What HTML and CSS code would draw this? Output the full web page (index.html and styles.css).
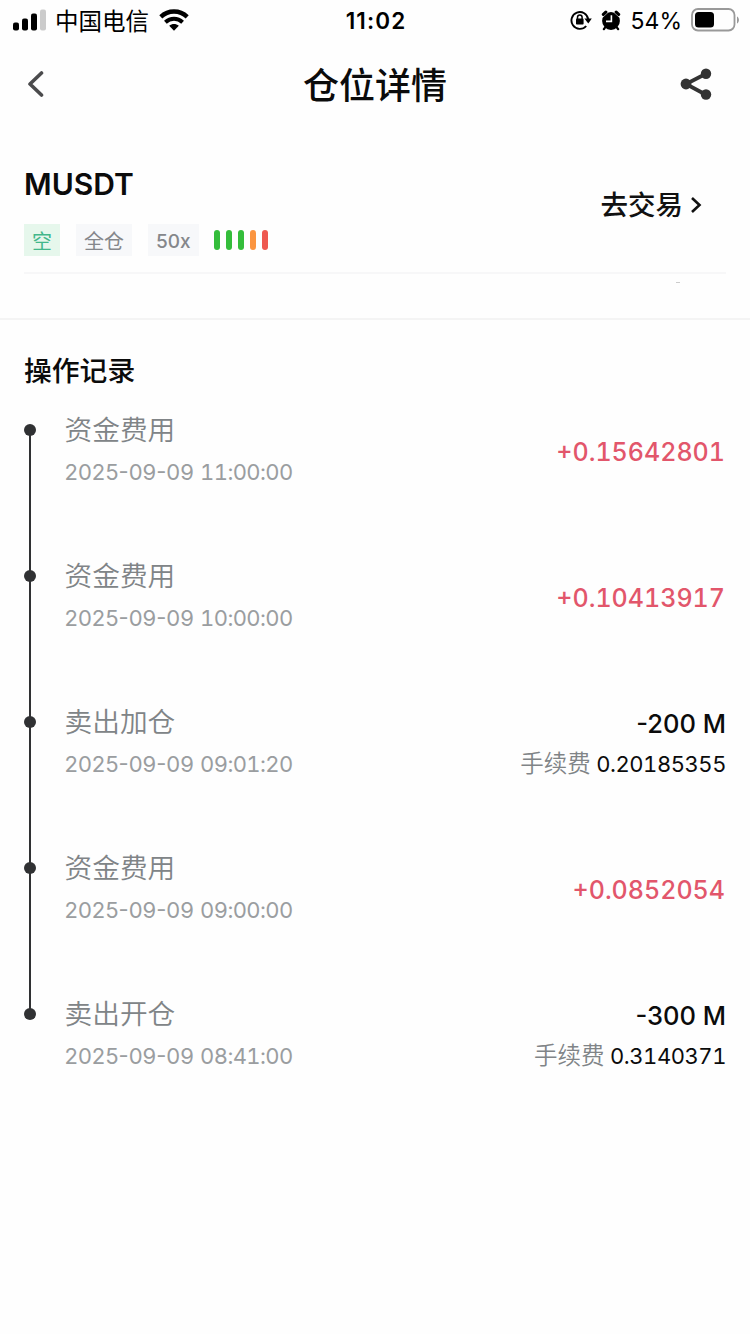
FILE: index.html
```html
<!DOCTYPE html>
<html lang="zh-CN">
<head>
  <meta charset="UTF-8" />
  <meta name="viewport" content="width=device-width, initial-scale=1.0"/>
  <title>仓位详情</title>
  <link rel="stylesheet" href="styles.css">
</head>
<body>
  <div class="status-bar">
    <div class="status-left">
      <svg class="signal" width="33" height="22" viewBox="0 0 33 22">
        <rect x="0" y="13.5" width="6" height="8" rx="2"/>
        <rect x="9" y="9.5" width="6" height="12" rx="2"/>
        <rect x="18" y="4.5" width="6" height="17" rx="2"/>
        <rect x="27" y="0.5" width="6" height="21" rx="2" fill="#cbcbcb"/>
      </svg>
      <span class="carrier">中国电信</span>
      <svg class="wifi" width="30" height="22" viewBox="0 0 30 22">
        <path d="M1.8 7.8C9.3 .7 20.7 .7 28.2 7.8" fill="none" stroke="#000" stroke-width="4.4"/>
        <path d="M6.4 13.2C11.4 8.6 18.6 8.6 23.6 13.2" fill="none" stroke="#000" stroke-width="4"/>
        <path d="M10.2 16.8C13 14.4 17 14.4 19.8 16.8L15 21.8Z"/>
      </svg>
    </div>
    <div class="status-time">11:02</div>
    <div class="status-right">
      <svg class="lock" width="22" height="20" viewBox="0 0 22 20">
        <path d="M18.2 9.5A8.4 8.4 0 1 0 16.2 16" fill="none" stroke="#000" stroke-width="1.9"/>
        <path d="M14.4 8.6h7.4l-3.5 4.8z"/>
        <rect x="6" y="8.6" width="7.6" height="6" rx="0.8"/>
        <path d="M7.5 9V7.2a2.3 2.3 0 0 1 4.6 0V9" fill="none" stroke="#000" stroke-width="1.5"/>
      </svg>
      <svg class="alarm" width="20" height="21" viewBox="0 0 20 21">
        <circle cx="10" cy="11" r="8.9"/>
        <path d="M2.4 4.4L4.8 2.2M15.2 2.2l2.4 2.2" stroke="#000" stroke-width="3.2" stroke-linecap="round"/>
        <path d="M1.8 7.2L7.4 2.2M18.2 7.2L12.6 2.2" stroke="#fff" stroke-width="0.5"/>
        <path d="M4.2 17.4l-1.4 1.8M15.8 17.4l1.4 1.8" stroke="#000" stroke-width="2.2" stroke-linecap="round"/>
        <path d="M10.4 5.2v6.2H5" fill="none" stroke="#fff" stroke-width="1.6"/>
      </svg>
      <span class="percent">54%</span>
      <svg class="battery" width="48" height="24" viewBox="0 0 48 24">
        <rect x="1" y="1" width="42.5" height="21.5" rx="6" fill="none" stroke="#999" stroke-width="1.8"/>
        <rect x="4" y="4" width="19" height="15.5" rx="3.5"/>
        <path d="M46 8.5c2.6 1.2 2.6 5.8 0 7z" fill="#999"/>
      </svg>
    </div>
  </div>

  <header>
    <svg class="back" width="18" height="28" viewBox="0 0 18 28">
      <path d="M15.5 3L4 14l11.5 11" fill="none" stroke="#4b4b4d" stroke-width="3.6" stroke-linecap="round" stroke-linejoin="round"/>
    </svg>
    <h1>仓位详情</h1>
    <svg class="share" width="32" height="32" viewBox="0 0 32 32">
      <path d="M25.5 6L6 16l19.5 10.5" fill="none" stroke="#333" stroke-width="3.8"/>
      <circle cx="26" cy="5.7" r="5.2" fill="#333"/>
      <circle cx="6" cy="16" r="5.4" fill="#333"/>
      <circle cx="26" cy="26.5" r="5.2" fill="#333"/>
    </svg>
  </header>

  <section class="position">
    <div class="position-info">
      <h2>MUSDT</h2>
      <div class="tags">
        <span class="tag short">空</span>
        <span class="tag">全仓</span>
        <span class="tag lever">50x</span>
        <div class="risk">
          <i></i><i></i><i></i><i class="orange"></i><i class="red"></i>
        </div>
      </div>
    </div>
    <a class="trade" href="#">
      <span>去交易</span>
      <svg width="12" height="18" viewBox="0 0 12 18">
        <path d="M2 2l7.5 7L2 16" fill="none" stroke="#111" stroke-width="2.6"/>
      </svg>
    </a>
    <span class="mark"></span>
  </section>

  <section class="records">
    <h3>操作记录</h3>
    <ul class="timeline">
      <li>
        <div class="event">
          <div class="name">资金费用</div>
          <div class="date">2025-09-09 <span>11:00:00</span></div>
        </div>
        <div class="amount gain">+0.15642801</div>
      </li>
      <li>
        <div class="event">
          <div class="name">资金费用</div>
          <div class="date">2025-09-09 <span>10:00:00</span></div>
        </div>
        <div class="amount gain">+0.10413917</div>
      </li>
      <li>
        <div class="event">
          <div class="name">卖出加仓</div>
          <div class="date">2025-09-09 <span>09:01:20</span></div>
        </div>
        <div class="amount">
          <div class="qty">-200 M</div>
          <div class="fee"><span>手续费</span> 0.20185355</div>
        </div>
      </li>
      <li>
        <div class="event">
          <div class="name">资金费用</div>
          <div class="date">2025-09-09 <span>09:00:00</span></div>
        </div>
        <div class="amount gain">+0.0852054</div>
      </li>
      <li>
        <div class="event">
          <div class="name">卖出开仓</div>
          <div class="date">2025-09-09 <span>08:41:00</span></div>
        </div>
        <div class="amount">
          <div class="qty">-300 M</div>
          <div class="fee"><span>手续费</span> 0.3140371</div>
        </div>
      </li>
    </ul>
  </section>
</body>
</html>
```
FILE: styles.css
```css
* {
  box-sizing: border-box;
}

body {
  margin: 0;
  font-family: Inter, "Noto Sans CJK SC", sans-serif;
  background-color: #fefefe;
  color: #0b0b0b;
}

h1, h2, h3 {
  margin: 0;
}

svg {
  display: block;
  flex-shrink: 0;
}

.status-bar {
  display: grid;
  grid-template-columns: 1fr auto 1fr;
  align-items: center;
  height: 40px;
  padding: 0 11px 0 13px;
  color: #000;
}

.status-left,
.status-right {
  display: flex;
  align-items: center;
}

.status-right {
  justify-content: flex-end;
}

.carrier {
  margin-left: 9px;
  padding-top: 3px;
  font-size: 23.5px;
  line-height: 37px;
}

.wifi {
  margin-left: 10px;
}

.status-time {
  padding-top: 1px;
  font-size: 22.5px;
  font-weight: 600;
  letter-spacing: 1.1px;
}

.alarm {
  margin-left: 9px;
}

.percent {
  margin: 0 9px 0 10px;
  padding-top: 2px;
  font-size: 23px;
}

header {
  display: grid;
  grid-template-columns: 32px 1fr 32px;
  align-items: center;
  height: 88px;
  padding: 0 38px 0 26px;
}

h1 {
  padding: 4px 0 0 12px;
  font-size: 36px;
  font-weight: 500;
  line-height: 52px;
  text-align: center;
}

.position {
  position: relative;
  display: flex;
  justify-content: space-between;
  height: 146px;
  margin: 0 24px;
  padding-top: 36px;
  border-bottom: 2px solid #f7f7f8;
}

h2 {
  font-size: 30px;
  font-weight: 600;
  line-height: 40px;
}

.tags {
  display: flex;
  align-items: center;
  margin-top: 20px;
}

.tag {
  height: 32px;
  margin-right: 16px;
  padding: 0 8px;
  background-color: #f7f8fa;
  color: #85878b;
  font-size: 20px;
  line-height: 36px;
}

.tag.short {
  background-color: #e6f7ec;
  color: #43b78b;
}

.tag.lever {
  margin-right: 15px;
  font-size: 19px;
  font-weight: 500;
}

.risk {
  display: flex;
  gap: 6px;
}

.risk i {
  width: 6px;
  height: 20px;
  border-radius: 3px;
  background-color: #34bd3b;
}

.risk .orange {
  background-color: #fb9540;
}

.risk .red {
  background-color: #ee5850;
}

.trade {
  display: flex;
  align-items: center;
  gap: 7px;
  height: 40px;
  margin: 21px 24px 0 0;
  color: #111;
  font-size: 27.5px;
  font-weight: 500;
  line-height: 38px;
  text-decoration: none;
}

/* speck left under the divider */
.mark {
  position: absolute;
  right: 46px;
  bottom: -11px;
  width: 4px;
  height: 1px;
  background-color: #ccc;
}

.records {
  margin-top: 44px;
  padding: 31px 24px 0;
  border-top: 2px solid #f4f4f4;
}

h3 {
  font-size: 27.8px;
  font-weight: 500;
  line-height: 40px;
}

.timeline {
  margin: 19px 0 0;
  padding: 0;
  list-style: none;
}

.timeline li {
  position: relative;
  display: flex;
  justify-content: space-between;
  align-items: center;
  height: 84px;
  margin-bottom: 62px;
  padding-left: 40.5px;
}

.timeline li:last-child {
  margin-bottom: 0;
}

.timeline li::before {
  content: "";
  position: absolute;
  left: 0;
  top: 14px;
  width: 12px;
  height: 12px;
  border-radius: 50%;
  background-color: #303133;
}

.timeline li::after {
  content: "";
  position: absolute;
  left: 5px;
  top: 20px;
  width: 2px;
  height: 146px;
  background-color: #303133;
}

.timeline li:last-child::after {
  display: none;
}

.name {
  color: #808487;
  font-size: 27.7px;
  font-weight: 350;
  line-height: 38px;
}

.date {
  padding-top: 2px;
  color: #9a9da0;
  font-size: 22px;
  line-height: 42px;
}

.date span {
  font-variant-numeric: tabular-nums;
  letter-spacing: -0.6px;
}

.amount {
  font-size: 25px;
  font-weight: 500;
  line-height: 40px;
  text-align: right;
}

.gain {
  padding-right: 1px;
  color: #e2566b;
  font-variant-numeric: tabular-nums;
}

.qty {
  font-size: 25.5px;
}

.fee {
  font-size: 22px;
  font-weight: 400;
  font-variant-numeric: tabular-nums;
  letter-spacing: -0.45px;
}

.fee span {
  color: #808487;
  font-size: 23.5px;
  font-weight: 350;
  letter-spacing: 0;
}
```
